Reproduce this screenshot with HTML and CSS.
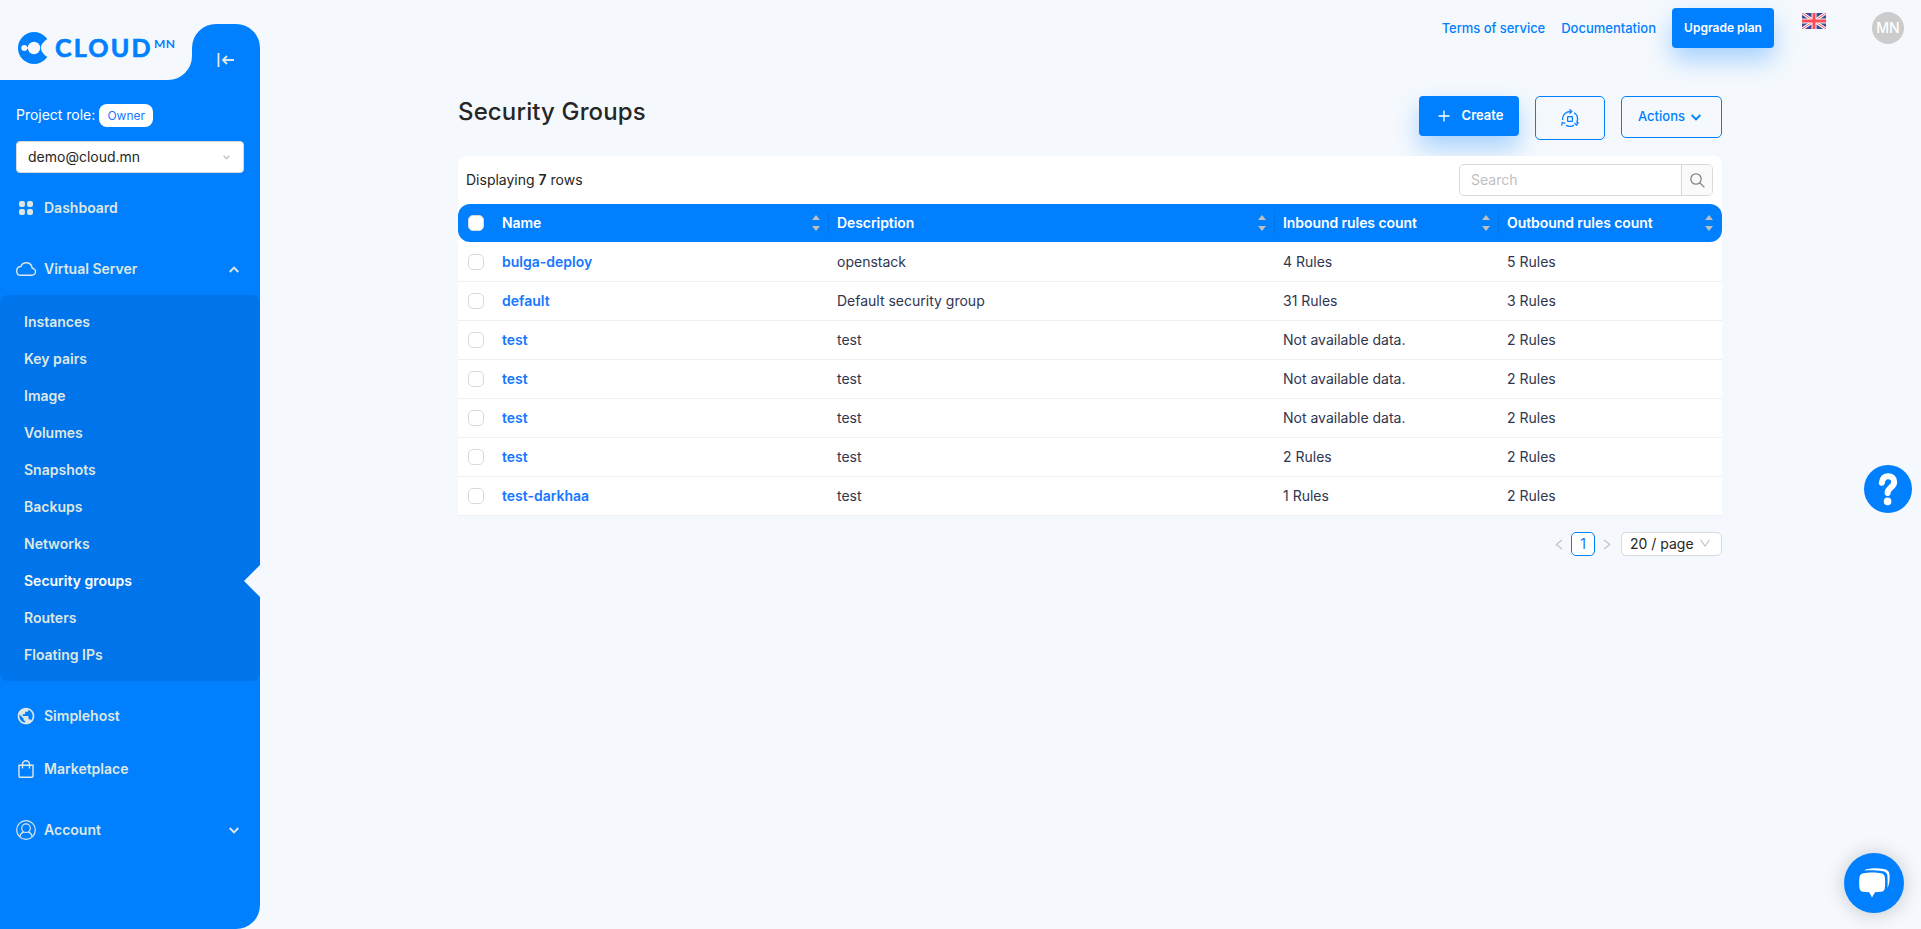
FILE: index.html
```html
<!DOCTYPE html>
<html lang="en">
<head>
<meta charset="utf-8">
<title>Security Groups</title>
<link rel="stylesheet" href="styles.css">
</head>
<body>
<div class="app">
  <aside class="sidebar">
    <div class="side-top">
      <div class="brand">
        <svg class="brand-mark" width="32" height="32" viewBox="0 0 32 32"><circle cx="16" cy="16" r="16" fill="#0080ff"/><path d="M28.800 7.200Q17 16 28.800 24.800L34 25V7z" fill="#f5f9fd"/><circle cx="16" cy="16" r="6.200" fill="#f5f9fd"/><circle cx="6.300" cy="16" r="3" fill="#f5f9fd"/><path d="M6 15.300h6v1.400H6z" fill="#f5f9fd"/></svg>
        <span class="brand-name">CLOUD</span><span class="brand-mn">MN</span>
      </div>
      <div class="tab"><svg width="18" height="16" viewBox="0 0 18 16" fill="none" stroke="#dfe7e3" stroke-width="1.900"><path d="M1.500 1v14M17 8H6M10 4L6 8l4 4"/></svg></div>
    </div>
    <div class="side-body">
      <div class="role">Project role: <span class="badge">Owner</span></div>
      <div class="project"><span>demo@cloud.mn</span><svg width="7" height="5" viewBox="0 0 7 5" fill="none" stroke="#b5b5b5" stroke-width="1.200"><path d="M.6.7l2.900 3 2.900-3"/></svg></div>
      <nav>
        <a class="item dash"><span class="ico"><svg width="14" height="14" viewBox="0 0 14 14" fill="#dfe7e3"><rect width="6" height="6" rx="2.200"/><rect x="8" width="6" height="6" rx="2.200"/><rect y="8" width="6" height="6" rx="2.200"/><rect x="8" y="8" width="6" height="6" rx="2.200"/></svg></span>Dashboard</a>
        <a class="item virt"><span class="ico"><svg width="20" height="14" viewBox="0 0 20 14" fill="none" stroke="#dfe7e3" stroke-width="1.400"><path d="M4.500 13.200h11.300a3.500 3.500 0 0 0 .4-7C15.700 3 13.200.8 10.300.8 7.800.8 5.800 2.200 4.900 4.500 2.400 4.700.7 6.600.7 8.900c0 2.500 1.600 4.300 3.800 4.300z"/></svg></span>Virtual Server<svg class="chev" width="10" height="7" viewBox="0 0 10 7" fill="none" stroke="#dfe7e3" stroke-width="1.900"><path d="M.7 6L5 1.700 9.300 6"/></svg></a>
        <div class="sub">
          <a>Instances</a><a>Key pairs</a><a>Image</a><a>Volumes</a><a>Snapshots</a><a>Backups</a><a>Networks</a><a class="active">Security groups</a><a>Routers</a><a>Floating IPs</a>
        </div>
        <a class="item host"><span class="ico"><svg width="20" height="20" viewBox="0 0 24 24" fill="#dfe7e3"><path d="M12 2C6.480 2 2 6.480 2 12s4.480 10 10 10 10-4.480 10-10S17.520 2 12 2zm-1 17.930c-3.950-.49-7-3.850-7-7.930 0-.62.080-1.210.21-1.790L9 15v1c0 1.100.9 2 2 2v1.930zm6.900-2.540c-.26-.81-1-1.390-1.900-1.390h-1v-3c0-.55-.45-1-1-1H8v-2h2c.55 0 1-.45 1-1V7h2c1.100 0 2-.9 2-2v-.41c2.930 1.190 5 4.060 5 7.410 0 2.080-.8 3.970-2.100 5.390z"/></svg></span>Simplehost</a>
        <a class="item market"><span class="ico"><svg width="16" height="18" viewBox="0 0 16 18" fill="none" stroke="#dfe7e3" stroke-width="1.400"><path d="M1 5.200h14v11a1 1 0 0 1-1 1H2a1 1 0 0 1-1-1zM4.500 8.500V4.300a3.500 3.500 0 0 1 7 0v4.200"/></svg></span>Marketplace</a>
        <a class="item account"><span class="ico"><svg width="20" height="20" viewBox="0 0 20 20" fill="none" stroke="#dfe7e3" stroke-width="1.200"><circle cx="10" cy="10" r="9.300"/><circle cx="10" cy="8.200" r="4.300"/><path d="M3.800 16.800c.5-2.500 2-4.200 4-4.900M16.200 16.800c-.5-2.500-2-4.200-4-4.900"/></svg></span>Account<svg class="chev" width="10" height="7" viewBox="0 0 10 7" fill="none" stroke="#dfe7e3" stroke-width="1.900"><path d="M.7 1L5 5.300 9.300 1"/></svg></a>
      </nav>
    </div>
  </aside>
  <main>
    <header class="topbar">
      <a class="tos">Terms of service</a><a class="docs">Documentation</a><button class="btn upgrade">Upgrade plan</button>
      <svg class="flag" width="24" height="16" viewBox="0 0 24 16"><path fill="#3f479b" d="M0 0h24v16H0z"/><path d="M0 0l24 16M24 0L0 16" stroke="#fff" stroke-width="3"/><path d="M0 0l24 16M24 0L0 16" stroke="#ff4b55" stroke-width="1"/><path d="M12 0v16M0 8h24" stroke="#f5f5f5" stroke-width="5"/><path d="M12 0v16M0 8h24" stroke="#ff4b55" stroke-width="3"/></svg>
      <span class="avatar">MN</span>
    </header>
    <section class="content">
      <div class="head">
        <h1>Security Groups</h1>
        <div class="actions">
          <button class="btn create"><svg width="12" height="12" viewBox="0 0 12 12" stroke="#fff" stroke-width="1.300"><path d="M6 .5v11M.5 6h11"/></svg><span>Create</span></button>
          <button class="outline refresh"><svg width="18" height="18" viewBox="0 0 18 18" fill="none" stroke="#0080ff" stroke-width="1.300"><rect x="6.600" y="7.600" width="4.800" height="4.800" rx=".5"/><path d="M1.600 11C1.100 6.500 4.300 2.600 9.500 2.400M13 3.700c2.700 1.500 4 4.300 3.400 7.800l-.6 2.500M5 16.400c2.500 1.200 5.500 1.200 8 0M8.500.4l2.300 2-2.300 2M13.300 14.300l2.300 1.700 1.900-2.600M.7 16.600l.5-3.100 3.100.9"/></svg></button>
          <button class="outline act"><span>Actions</span><svg width="10" height="7" viewBox="0 0 10 7" fill="none" stroke="#0080ff" stroke-width="1.900"><path d="M.7 1L5 5.300 9.300 1"/></svg></button>
        </div>
      </div>
      <div class="card">
        <div class="tools">
          <span class="count">Displaying <b>7</b> rows</span>
          <div class="search"><span class="ph">Search</span><span class="go"><svg width="15" height="15" viewBox="0 0 15 15" fill="none" stroke="#858585" stroke-width="1.300"><circle cx="6" cy="6" r="5.200"/><path d="M9.800 9.800l4.600 4.600"/></svg></span></div>
        </div>
        <div class="row thead">
          <div><i class="cb"></i></div>
          <div class="th">Name<i class="sort"></i></div><div class="th">Description<i class="sort"></i></div><div class="th">Inbound rules count<i class="sort"></i></div><div class="th">Outbound rules count<i class="sort"></i></div>
        </div>
        <div class="row"><div><i class="cb"></i></div><div class="name">bulga-deploy</div><div>openstack</div><div>4 Rules</div><div>5 Rules</div></div>
        <div class="row"><div><i class="cb"></i></div><div class="name">default</div><div>Default security group</div><div>31 Rules</div><div>3 Rules</div></div>
        <div class="row"><div><i class="cb"></i></div><div class="name">test</div><div>test</div><div>Not available data.</div><div>2 Rules</div></div>
        <div class="row"><div><i class="cb"></i></div><div class="name">test</div><div>test</div><div>Not available data.</div><div>2 Rules</div></div>
        <div class="row"><div><i class="cb"></i></div><div class="name">test</div><div>test</div><div>Not available data.</div><div>2 Rules</div></div>
        <div class="row"><div><i class="cb"></i></div><div class="name">test</div><div>test</div><div>2 Rules</div><div>2 Rules</div></div>
        <div class="row"><div><i class="cb"></i></div><div class="name">test-darkhaa</div><div>test</div><div>1 Rules</div><div>2 Rules</div></div>
      </div>
      <div class="pager">
        <svg width="8" height="11" viewBox="0 0 8 11" fill="none" stroke="#bfbfbf" stroke-width="1.100"><path d="M7 1L1.200 5.500 7 10"/></svg>
        <span class="page">1</span>
        <svg width="8" height="11" viewBox="0 0 8 11" fill="none" stroke="#bfbfbf" stroke-width="1.100"><path d="M1 1l5.800 4.500L1 10"/></svg>
        <span class="size">20 / page<svg width="10" height="8" viewBox="0 0 10 8" fill="none" stroke="#bfbfbf" stroke-width="1.100"><path d="M.5.8L5 7 9.500.8"/></svg></span>
      </div>
    </section>
  </main>
  <div class="help"><svg width="48" height="48" viewBox="0 0 48 48"><path d="M17.800 17.800c.5-4.300 2.900-6.600 6.400-6.600 3.600 0 6 2.300 6 5.700 0 5.600-6.600 5.300-6.600 11.200" fill="none" stroke="#fff" stroke-width="6" stroke-linecap="round" stroke-linejoin="round"/><circle cx="23.600" cy="36.400" r="3.800" fill="#fff"/></svg></div>
  <div class="chat"><svg width="60" height="60" viewBox="0 0 60 60" fill="#fff"><path d="M19.500 20.200c5-.9 13.500-.9 17.500 0 2.500.6 3.700 2 3.900 4 .4 4 .3 8-.1 11-.4 2.200-1.600 3.300-3.800 3.600-2 .3-4 .5-6 .5L28 44.500l-2.800-5.200c-2 0-4-.2-6-.5-2.200-.4-3.400-1.600-3.700-3.600-.5-3.500-.5-7.500 0-11 .3-2.200 1.600-3.500 4-4z"/><path d="M20.500 17.400c1.500-1.500 4-1.900 7-2 4-.2 8.500 0 12.500.7 3.500.6 5.300 2.300 5.500 5.300.3 4.500.2 9-2 13.600.2-4.500.2-8.500-.1-12.300-.3-2.600-1.700-3.900-4.500-4.400-5.500-1-12.500-1.300-18.400-.9z"/></svg></div>
</div>
</body>
</html>
```
FILE: styles.css
```css
* { box-sizing: border-box; }
body { margin: 0; background: #f5f9fd; font: 400 14px/22px Inter, sans-serif; color: #262626; }
svg { display: block; flex: none; }
button { font-family: inherit; margin: 0; padding: 0; }
.app { display: flex; height: 929px; overflow: hidden; }
.sidebar { width: 260px; flex: none; display: flex; flex-direction: column; }
.side-top { display: flex; align-items: flex-end; height: 80px; background: linear-gradient(#f5f9fd 50px, #0080ff 50px); }
.brand { width: 192px; height: 80px; background: #f5f9fd; border-bottom-right-radius: 24px; padding: 32px 0 0 18px; display: flex; color: #0080ff; }
.brand-name { font: 700 25px/30px Lato, sans-serif; -webkit-text-stroke: .7px #0080ff; letter-spacing: 2.200px; margin-left: 5px; width: 99px; }
.brand-mn { font: 700 12px/13px Lato, sans-serif; letter-spacing: .4px; margin-top: 5px; }
.tab { width: 68px; height: 56px; background: #0080ff; border-radius: 24px 24px 0 0; padding: 28px 0 0 25px; }
.side-body { flex: 1; background: #0080ff; border-bottom-right-radius: 24px; color: #dfe7e3; }
.role { padding: 24px 0 0 16px; height: 61px; color: #fff; display: flex; gap: 4px; line-height: 22px; font-weight: 400; letter-spacing: -.02px; }
.badge { background: #fff; color: #1677ff; height: 23px; width: 54px; border-radius: 8px; font-size: 12px; line-height: 23px; text-align: center; }
.project { margin: 0 16px; height: 32px; background: #fff; border: 1px solid #d9d9d9; border-radius: 4px; display: flex; align-items: center; justify-content: space-between; padding: 0 13px 0 11px; color: #262626; }
.item { display: flex; align-items: center; height: 40px; padding: 0 21px 0 16px; font-weight: 600; }
.ico { width: 20px; margin-right: 8px; display: flex; justify-content: center; }
.chev { margin-left: auto; }
.dash { margin-top: 15px; }
.virt { margin-top: 21px; }
.sub { margin-top: 6px; padding: 8px 0; background: #0074eb; border-radius: 8px; }
.sub a { display: flex; align-items: center; height: 37px; padding-left: 24px; font-weight: 600; }
.sub .active { color: #fff; justify-content: space-between; }
.active::after { content: ""; border: 16px solid transparent; border-right-color: #f5f9fd; border-left: 0; }
.host { margin-top: 15px; }
.market { margin-top: 13px; }
.account { margin-top: 21px; }
main { flex: 1; }
.topbar { display: flex; justify-content: flex-end; padding: 8px 17px 0 0; height: 56px; color: #0080ff; font-size: 13px; font-weight: 500; line-height: 40px; }
.tos { letter-spacing: -.05px; }
.docs { margin: 0 16px; }
.btn { background: #0080ff; color: #fff; border: 0; border-radius: 4px; height: 40px; font-weight: 600; font-size: 12px; box-shadow: 0 12px 24px rgba(0,128,255,.32); }
.upgrade { width: 102px; padding-bottom: 1px; }
.flag { margin: 5px 46px 0 28px; }
.avatar { width: 32px; height: 32px; margin-top: 4px; border-radius: 50%; background: #ccc; color: #fff; font-size: 14px; line-height: 32px; text-align: center; }
.content { width: 1264px; margin: 40px 0 0 198px; }
.head { display: flex; justify-content: space-between; height: 60px; }
h1 { margin: 0; font-size: 24px; line-height: 32px; font-weight: 500; letter-spacing: .13px; }
.actions { display: flex; align-items: flex-start; gap: 16px; }
.create { width: 100px; display: flex; align-items: center; justify-content: center; gap: 12px; font-size: 13px; padding-left: 3px; }
.create span, .act span { padding-bottom: 2px; }
.outline { border: 1px solid #0080ff; background: none; border-radius: 5px; color: #0080ff; font-size: 13px; font-weight: 500; display: flex; align-items: center; justify-content: center; gap: 6px; }
.refresh { width: 70px; height: 44px; }
.act { width: 101px; height: 42px; padding-right: 4px; }
.card { background: #fff; border-radius: 8px 8px 0 0; position: relative; }
.tools { display: flex; justify-content: space-between; height: 48px; padding: 8px 9px 0 8px; line-height: 32px; }
.count b { font-weight: 600; }
.search { width: 254px; height: 32px; border: 1px solid #d9d9d9; border-radius: 5px; display: flex; line-height: 30px; overflow: hidden; }
.ph { flex: 1; padding-left: 11px; color: #bfbfbf; }
.go { width: 31px; border-left: 1px solid #d9d9d9; background: #fafafa; display: flex; align-items: center; justify-content: center; }
.row { display: grid; grid-template-columns: 36px 335px 446px 224px 223px; height: 39px; border-bottom: 1px solid #f0f0f0; line-height: 38px; color: #2f3650; }
.row > div { padding-left: 8px; display: flex; align-items: center; }
.row > div:first-child { padding-left: 10px; }
.cb { width: 16px; height: 16px; border: 1px solid #d9d9d9; border-radius: 5px; background: #fff; }
.row .name { color: #1677ff; font-weight: 600; }
.thead { background: #0080ff; border: 0; border-radius: 12px; height: 38px; margin-bottom: 1px; color: #fff; font-weight: 600; letter-spacing: -.07px; }
.th { justify-content: space-between; padding-right: 9px; position: relative; }
.th:not(:last-child)::after { content: ""; position: absolute; right: 0; top: 8px; width: 1px; height: 22px; background: rgba(0,0,0,.08); }
.sort { width: 8px; height: 16px; display: flex; flex-direction: column; justify-content: space-between; }
.sort::before, .sort::after { content: ""; border: 4px solid transparent; }
.sort::before { border-top: 0; border-bottom: 5px solid #bfbfbf; }
.sort::after { border-bottom: 0; border-top: 5px solid #bfbfbf; }
.pager { display: flex; justify-content: flex-end; align-items: center; height: 24px; margin-top: 16px; }
.page { width: 24px; height: 24px; margin: 0 8px; border: 1px solid #0080ff; border-radius: 5px; background: #fff; color: #1677ff; text-align: center; line-height: 22px; }
.size { width: 101px; height: 24px; margin-left: 10px; border: 1px solid #d9d9d9; border-radius: 5px; background: #fff; display: flex; align-items: center; justify-content: space-between; padding: 0 11px 0 8px; }
.size svg { margin-bottom: 2px; }
.help, .chat { position: absolute; border-radius: 50%; background: #0080ff; }
.help { left: 1864px; top: 465px; width: 48px; height: 48px; }
.chat { left: 1844px; top: 853px; width: 60px; height: 60px; box-shadow: 0 1px 20px rgba(0,0,0,.2); }
```
